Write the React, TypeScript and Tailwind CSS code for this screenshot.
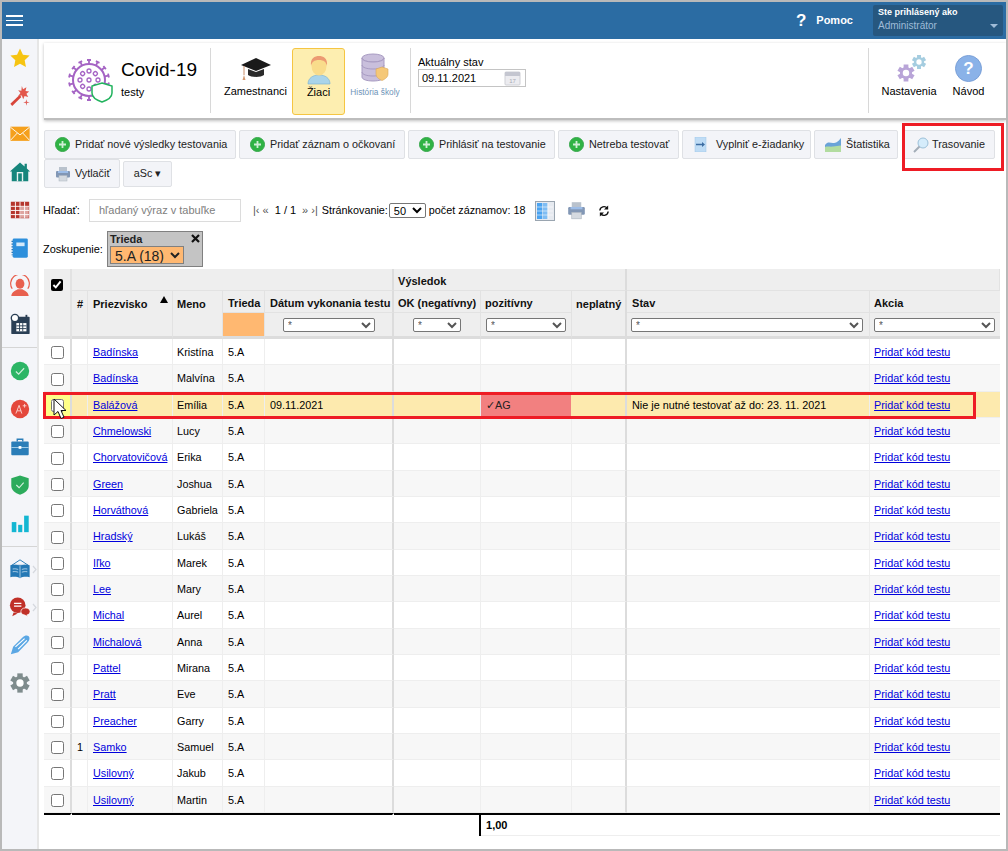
import React, { ReactNode } from 'react';

const FONT = { fontFamily: '"Liberation Sans", Arial, sans-serif' };

const students: [string, string][] = [
  ['Badínska', 'Kristína'],
  ['Badínska', 'Malvína'],
  ['Balážová', 'Emília'],
  ['Chmelowski', 'Lucy'],
  ['Chorvatovičová', 'Erika'],
  ['Green', 'Joshua'],
  ['Horváthová', 'Gabriela'],
  ['Hradský', 'Lukáš'],
  ['Iľko', 'Marek'],
  ['Lee', 'Mary'],
  ['Michal', 'Aurel'],
  ['Michalová', 'Anna'],
  ['Pattel', 'Mirana'],
  ['Pratt', 'Eve'],
  ['Preacher', 'Garry'],
  ['Samko', 'Samuel'],
  ['Usilovný', 'Jakub'],
  ['Usilovný', 'Martin'],
];

function Svg({ size = 22, children }: { size?: number; children: ReactNode }) {
  return (
    <svg width={size} height={size} viewBox="0 0 24 24" className="shrink-0">
      {children}
    </svg>
  );
}

function Gear({ x, y, r, color }: { x: number; y: number; r: number; color: string }) {
  return (
    <g>
      {[0, 60, 120].map((a) => (
        <rect
          key={a}
          x={x - r * 0.28}
          y={y - r}
          width={r * 0.56}
          height={r * 2}
          fill={color}
          transform={`rotate(${a} ${x} ${y})`}
        />
      ))}
      <circle cx={x} cy={y} r={r * 0.72} fill={color} />
      <circle cx={x} cy={y} r={r * 0.38} fill="#fff" />
    </g>
  );
}

const sideTop: ReactNode[] = [
  <Svg key="star"><path d="M12 1.500l3.200 6.900 7.300.9-5.400 5.100 1.400 7.400L12 18.200l-6.500 3.600 1.400-7.400L1.500 9.300l7.300-.9z" fill="#f6c412" /></Svg>,
  <Svg key="wand">
    <path d="M1.500 20.500l10-9.500 2 2-10 10z" fill="#d8453a" />
    <path d="M14 1l1.300 3.500 3.700-2-1 4 4 .5-3 2.500 2 3.500-4-1-1.500 3.500-1.500-4-4 .5 2.500-3.300-2.500-3 3.500.5z" fill="#e2574c" />
    <path d="M19 15.500l.7 2.800 2.800.7-2.800.7-.7 2.800-.7-2.800-2.800-.7 2.800-.7z" fill="#e0605a" />
  </Svg>,
  <Svg key="mail">
    <rect x="1.500" y="4" width="21" height="15.500" fill="#f5a01c" />
    <path d="M1.500 4.500L12 13 22.500 4.500M1.500 19L9 11M22.500 19L15 11" stroke="#fff" strokeWidth="1" fill="none" />
  </Svg>,
  <Svg key="home">
    <path d="M12 1.500l5 4.500V3h2.500v5.200L23 11.500h-2V22H3V11.500H1z" fill="#16857c" />
    <rect x="8.500" y="12" width="7" height="10" fill="#fff" opacity=".9" />
    <rect x="10" y="13.500" width="4" height="8.500" fill="#16857c" />
  </Svg>,
  <Svg key="grid">
    <rect x="2" y="3" width="20" height="18" fill="#b5352d" />
    <path d="M2 8h20M2 12.500h20M2 17h20M7 3v18M12 3v18M17 3v18" stroke="#fff" strokeWidth="1" />
    <rect x="12.500" y="8.500" width="9" height="12" fill="#fff" opacity=".55" />
  </Svg>,
  <Svg key="book">
    <rect x="4" y="1.500" width="16.500" height="21" rx="1.500" fill="#2d8fdc" />
    <rect x="8" y="6" width="9" height="4" fill="#d4e9fa" />
    <path d="M3.500 4v16" stroke="#1b6fb2" strokeWidth="1.500" strokeDasharray="1.500 1.500" />
  </Svg>,
  <Svg key="person">
    <path d="M3.500 15A10.200 10.200 0 1120.500 15" fill="none" stroke="#e8604f" strokeWidth="1.300" />
    <ellipse cx="12" cy="9.500" rx="4.800" ry="5.500" fill="#e8604f" />
    <path d="M2.500 23c.5-5 5-6 7-7.500h5c2 1.500 6.500 2.500 7 7.500z" fill="#e8604f" />
  </Svg>,
  <Svg key="calendar">
    <rect x="2.500" y="4" width="20" height="19" rx="1" fill="#2a3f55" />
    <rect x="8" y="11" width="11" height="9" fill="#fff" />
    <path d="M11.500 11v9M15 11v9M8 14h11M8 17h11" stroke="#2a3f55" strokeWidth="1" />
    <circle cx="6.500" cy="5.500" r="4" fill="#fff" stroke="#2a3f55" strokeWidth="1.500" />
    <rect x="18" y="2" width="2" height="4" fill="#2a3f55" />
  </Svg>,
];

const sideMid: ReactNode[] = [
  <Svg key="check">
    <circle cx="12" cy="12" r="10" fill="#2cb565" />
    <path d="M7.500 12.500l3 3 6-6.500" stroke="#cdeedb" strokeWidth="1.300" fill="none" />
  </Svg>,
  <Svg key="grade">
    <circle cx="12" cy="12" r="10" fill="#e4483c" />
    <path d="M7.500 17l3.500-9 3 9M8.800 14h4.500M15 8.500h4M17 6.500v4" stroke="#fbd4d0" strokeWidth="1" fill="none" />
  </Svg>,
  <Svg key="case">
    <rect x="2.500" y="6" width="19" height="15" rx="1" fill="#2a7db8" />
    <path d="M9 6V3.500h6V6" stroke="#2a7db8" strokeWidth="1.500" fill="none" />
    <rect x="2.500" y="12" width="19" height="1" fill="#a8d2ec" />
    <rect x="10.500" y="11" width="3" height="3" fill="#fff" />
  </Svg>,
  <Svg key="shield">
    <path d="M12 1.500l9.500 3v8c0 5-4 8.500-9.500 10-5.500-1.500-9.500-5-9.500-10v-8z" fill="#2cab5c" />
    <path d="M8 12l3 3 5-5.500" stroke="#d6f1e0" strokeWidth="1.200" fill="none" />
  </Svg>,
  <Svg key="chart">
    <rect x="3" y="11" width="5" height="11" fill="#13b6d2" />
    <rect x="10" y="14" width="4.500" height="8" fill="#13b6d2" />
    <rect x="16.500" y="4" width="5" height="18" fill="#13b6d2" />
  </Svg>,
];

const sideBottom: { icon: ReactNode; more?: boolean }[] = [
  {
    more: true,
    icon: (
      <Svg key="open">
        <path d="M12 2L3 8h18z" fill="none" stroke="#2478b5" strokeWidth="1" />
        <path d="M1.500 8c4-1 8-.5 10.500 1 2.500-1.500 6.500-2 10.500-1v13c-4-1-8-.5-10.500 1-2.500-1.500-6.500-2-10.500-1z" fill="#2478b5" />
        <path d="M12 9v13M4 12c2.500-.5 4.500 0 6 .5M4 15c2.500-.5 4.500 0 6 .5M14 12.500c1.500-.5 3.500-1 6-.5M14 15.500c1.500-.5 3.500-1 6-.5" stroke="#d4e8f5" strokeWidth=".8" fill="none" />
      </Svg>
    ),
  },
  {
    more: true,
    icon: (
      <Svg key="chat">
        <circle cx="9.500" cy="10" r="8.500" fill="#c03028" />
        <path d="M5 18l-1.500 4 6-3z" fill="#c03028" />
        <path d="M5.500 8h8M5.500 11h8" stroke="#fff" strokeWidth="1.200" />
        <path d="M13 17c0-2.500 2-4 5-4s5 1.500 5 4-2 3.500-3.500 3.700L22 23l-5-2.300c-2.500-.2-4-1.500-4-3.700z" fill="#c03028" stroke="#fff" strokeWidth=".8" />
      </Svg>
    ),
  },
  {
    icon: (
      <Svg key="pen">
        <path d="M2 22l2.500-8L15 3.500c2-2 5-2.500 6.500-1s1 4.500-1 6.500L10 20z" fill="#5ba7e4" />
        <path d="M7 14L17 5M10 16.500L19.500 7" stroke="#fff" strokeWidth="1.300" />
      </Svg>
    ),
  },
  {
    icon: (
      <Svg key="gear">
        <Gear x={12} y={12} r={10.500} color="#7f8c8d" />
      </Svg>
    ),
  },
];

function PlusIcon() {
  return (
    <span className="w-[15px] h-[15px] shrink-0 rounded-full bg-[#2fb344] flex items-center justify-center border border-[#37a84c]">
      <svg width="9" height="9" viewBox="0 0 9 9">
        <path d="M4.500 1v7M1 4.500h7" stroke="#cfeed5" strokeWidth="1.800" />
      </svg>
    </span>
  );
}

function PrinterIcon({ size = 16 }: { size?: number }) {
  return (
    <svg width={size} height={size} viewBox="0 0 16 16" className="shrink-0">
      <rect x="4" y="1" width="8" height="5" fill="#b9c2cd" />
      <rect x="1" y="5" width="14" height="6.500" rx="1" fill="#8297b5" />
      <rect x="3" y="5" width="10" height="2" fill="#9dbde8" />
      <rect x="4" y="9.500" width="8" height="5.500" fill="#d5dae0" stroke="#a9b2bd" strokeWidth=".5" />
    </svg>
  );
}

function Btn({ icon, label, className }: { icon: ReactNode; label: string; className: string }) {
  return (
    <button className={`flex items-center gap-[5px] pl-[10px] h-[29px] bg-[#f3f4f8] border border-[#dfe1e5] rounded-[2px] text-[10.800px] text-[#222] whitespace-nowrap ${className}`}>
      {icon}
      <span>{label}</span>
    </button>
  );
}

function CardIcon({ icon, label, className = '' }: { icon: ReactNode; label: string; className?: string }) {
  return (
    <div className={`flex flex-col items-center h-[67px] pt-[5px] ${className}`}>
      <div className="h-[31px] flex items-center justify-center">{icon}</div>
      <div className="mt-px text-[11px] leading-[13px] text-black whitespace-nowrap">{label}</div>
    </div>
  );
}

function CovidLogo() {
  const spikes = Array.from({ length: 14 }, (_, i) => (i * 360) / 14);
  const ring = Array.from({ length: 8 }, (_, i) => (i * 360) / 8);
  return (
    <svg width="46" height="44" viewBox="0 0 46 44">
      <circle cx="21" cy="21" r="16" fill="none" stroke="#a564c4" strokeWidth="2" />
      {spikes.map((a) => (
        <g key={a} transform={`rotate(${a} 21 21)`}>
          <path d="M21 5V1M19 1h4" stroke="#a564c4" strokeWidth="1.800" fill="none" />
        </g>
      ))}
      <circle cx="21" cy="21" r="2" fill="none" stroke="#a564c4" strokeWidth="1.300" />
      {ring.map((a) => (
        <g key={a} transform={`rotate(${a} 21 21)`}>
          <circle cx="21" cy="12" r="2" fill="none" stroke="#a564c4" strokeWidth="1.300" />
        </g>
      ))}
      <path d="M34 24l10 3v7c0 4-4 7-10 9-6-2-10-5-10-9v-7z" fill="#fff" stroke="#22b35e" strokeWidth="1.500" />
    </svg>
  );
}

function FilterSel({ className }: { className: string }) {
  return (
    <select className={`h-[14px] bg-white border border-[#767676] rounded-[2px] text-[10px] font-normal text-[#555] leading-none ${className}`}>
      <option>*</option>
    </select>
  );
}

const th = 'bg-[#eeeeee] border-r border-b border-[#e2e2e2] text-left font-bold text-[11px] text-[#111] px-[5px] align-middle whitespace-nowrap overflow-hidden';

export default function App() {
  return (
    <div style={FONT} className="w-[1008px] h-[851px] bg-white border-t-2 border-l-2 border-r-2 border-b-2 border-[#b9b9b9] flex flex-col overflow-hidden relative">
      {/* top bar */}
      <header className="h-[37px] shrink-0 bg-[#2b6ca3] flex items-center">
        <div className="ml-[4px] w-[17px] flex flex-col gap-[3px]">
          <span className="h-[1.500px] bg-white" />
          <span className="h-[1.500px] bg-white" />
          <span className="h-[1.500px] bg-white" />
        </div>
        <span className="ml-auto text-[17px] font-bold text-white">?</span>
        <span className="ml-[10px] text-[11px] font-bold text-white">Pomoc</span>
        <div className="ml-[20px] mr-[3px] w-[130px] h-[31px] bg-[#26577f] rounded-[2px] px-[5px] pt-px relative">
          <div className="text-[9px] font-bold text-white leading-[13px]">Ste prihlásený ako</div>
          <div className="text-[10px] text-[#9fbcd8] leading-[14px]">Administrátor</div>
          <span className="absolute right-[5px] top-[19px] w-0 h-0 border-x-[4px] border-x-transparent border-t-[4px] border-t-[#9fbcd8]" />
        </div>
      </header>

      <div className="flex flex-1 min-h-0">
        {/* sidebar */}
        <aside className="w-[37px] shrink-0 bg-[#f4f5f9] border-r-2 border-[#e6e6e6] flex flex-col">
          {sideTop.map((ic, i) => (
            <div key={i} className="h-[38px] flex items-center justify-center">{ic}</div>
          ))}
          <div className="h-px bg-[#d5d5d5] mt-[4px] mb-[4px]" />
          {sideMid.map((ic, i) => (
            <div key={i} className="h-[38px] flex items-center justify-center">{ic}</div>
          ))}
          <div className="h-px bg-[#d5d5d5] mt-[4px] mb-[3px]" />
          {sideBottom.map((item, i) => (
            <div key={i} className="h-[38px] flex items-center justify-center relative">
              {item.icon}
              {item.more && (
                <svg width="5" height="9" viewBox="0 0 5 9" className="absolute right-0 top-[15px]">
                  <path d="M1 1l3 3.500L1 8" stroke="#d5d8de" strokeWidth="1.200" fill="none" />
                </svg>
              )}
            </div>
          ))}
        </aside>

        <main className="flex-1 min-w-0">
          {/* header card */}
          <div className="ml-[5px] mt-[4px] h-[77px] bg-white border-b-2 border-[#bdbdbd] shadow-[0_1px_3px_rgba(0,0,0,0.25)] flex items-stretch py-[5px]">
            <div className="w-[167px] shrink-0 border-r border-[#d8d8d8] flex items-center pl-[24px] gap-[7px]">
              <CovidLogo />
              <div className="-mt-[2px]">
                <div className="text-[19px] leading-[24px] text-black">Covid-19</div>
                <div className="text-[11px] leading-[20px] text-black">testy</div>
              </div>
            </div>
            <CardIcon
              className="ml-[13px] w-[63px]"
              label="Zamestnanci"
              icon={
                <svg width="32" height="26" viewBox="0 0 32 26">
                  <path d="M16 2L31 9l-15 6L1 9z" fill="#1a1a1a" />
                  <path d="M8 13v6c3 2.500 13 2.500 16 0v-6l-8 3z" fill="#2b2b2b" />
                  <path d="M4 10v9" stroke="#c98e6a" strokeWidth="1" />
                  <path d="M4 19l-1.500 5h3z" fill="#d49a72" />
                </svg>
              }
            />
            <CardIcon
              className="ml-[5px] w-[53px] bg-[#fdeeb0] border border-[#f5c542] rounded-[3px]"
              label="Žiaci"
              icon={
                <svg width="26" height="30" viewBox="0 0 26 30">
                  <path d="M2 29c0-6 5-9 11-9s11 3 11 9z" fill="#a9d4ea" stroke="#7fb4d3" strokeWidth=".7" />
                  <ellipse cx="13" cy="11" rx="7.500" ry="9.500" fill="#f9dc8b" />
                  <path d="M5 11C4 3 9 1 13 1s9 2 8 10c-1-4-3-6-8-6s-7 2-8 6z" fill="#ec9a72" />
                </svg>
              }
            />
            <div className="ml-[5px] w-[50px] flex flex-col items-center pt-[5px]">
              <svg width="30" height="31" viewBox="0 0 30 31">
                <ellipse cx="13" cy="5" rx="11" ry="4" fill="#c9bfdc" stroke="#a89bc2" />
                <path d="M2 5v19c0 2.500 5 4 11 4s11-1.500 11-4V5c0 2.500-5 4-11 4S2 7.500 2 5z" fill="#c9bfdc" stroke="#a89bc2" />
                <path d="M2 12c0 2.500 5 4 11 4s11-1.500 11-4M2 19c0 2.500 5 4 11 4s11-1.500 11-4" fill="none" stroke="#a89bc2" />
                <path d="M22 14l6 2v5c0 3-2.500 5-6 6.500-3.500-1.500-6-3.500-6-6.500v-5z" fill="#f5c878" stroke="#d9a85a" strokeWidth=".6" />
              </svg>
              <div className="mt-[3px] text-[8.300px] leading-[10px] text-[#6e93b8] whitespace-nowrap">História školy</div>
            </div>
            <div className="ml-[10px] w-px bg-[#d8d8d8] shrink-0" />
            <div className="ml-[7px] pt-[8px]">
              <div className="text-[11px] leading-[13px] text-black">Aktuálny stav</div>
              <div className="w-[108px] h-[18px] border border-[#c4c4c4] flex items-center justify-between pl-[3px] pr-[4px] text-[11px] text-black">
                <span>09.11.2021</span>
                <svg width="17" height="16" viewBox="0 0 17 16">
                  <rect x="1" y="2" width="15" height="13" rx="1" fill="#ececf0" stroke="#cfd0d6" />
                  <rect x="1" y="2" width="15" height="4" fill="#c4c6d0" />
                  <text x="8.500" y="13" fontSize="6" textAnchor="middle" fill="#a9abb4">17</text>
                </svg>
              </div>
            </div>
            <div className="ml-auto w-px bg-[#d8d8d8] shrink-0" />
            <CardIcon
              className="ml-[13px] w-[54px]"
              label="Nastavenia"
              icon={
                <svg width="30" height="30" viewBox="0 0 30 30" className="translate-x-[2px]">
                  <Gear x={10} y={19} r={8.500} color="#b9a5d8" />
                  <Gear x={23} y={8} r={7} color="#a5cde0" />
                </svg>
              }
            />
            <CardIcon
              className="ml-[17px] mr-[22px] w-[31px]"
              label="Návod"
              icon={
                <span className="w-[27px] h-[27px] rounded-full bg-[#8ab2e8] border border-[#7aa0d8] text-white text-[17px] font-bold flex items-center justify-center">?</span>
              }
            />
          </div>

          {/* action buttons */}
          <div className="ml-[5px] mt-[10px] flex gap-[3px]">
            <Btn className="w-[192px]" icon={<PlusIcon />} label="Pridať nové výsledky testovania" />
            <Btn className="w-[166px]" icon={<PlusIcon />} label="Pridať záznam o očkovaní" />
            <Btn className="w-[147px]" icon={<PlusIcon />} label="Prihlásiť na testovanie" />
            <Btn className="w-[121px]" icon={<PlusIcon />} label="Netreba testovať" />
            <Btn
              className="w-[129px]"
              label="Vyplniť e-žiadanky"
              icon={
                <svg width="16" height="15" viewBox="0 0 16 15" className="mr-[2px]">
                  <rect x="2" y="0" width="11" height="15" fill="#bfdcf5" stroke="#9cc4e6" strokeWidth=".5" />
                  <path d="M3 7.500h7" stroke="#3d6da3" strokeWidth="1.500" />
                  <path d="M9 5l3 2.500L9 10z" fill="#3d6da3" />
                </svg>
              }
            />
            <Btn
              className="w-[84px]"
              label="Štatistika"
              icon={
                <svg width="16" height="14" viewBox="0 0 16 14">
                  <path d="M0 14V7c3-4 5-2 8-2s5-1 8-5v14z" fill="#6aa3d8" />
                  <path d="M0 14V9c3-1 5 0 8-.5s5-.5 8-1V14z" fill="#b2dca0" />
                </svg>
              }
            />
            <Btn
              className="ml-px w-[93px] !gap-[3px]"
              label="Trasovanie"
              icon={
                <svg width="16" height="16" viewBox="0 0 16 16">
                  <circle cx="10" cy="6" r="5" fill="#d5ecfb" stroke="#9cc0d8" />
                  <path d="M6.500 9.500L1 15" stroke="#a3adb8" strokeWidth="2" />
                </svg>
              }
            />
          </div>
          <div className="ml-[5px] flex gap-[3px] items-center">
            <Btn className="w-[76px] !gap-[4px]" icon={<PrinterIcon />} label="Vytlačiť" />
            <button className="w-[49px] h-[26px] bg-[#f3f4f8] border border-[#dfe1e5] rounded-[2px] text-[10.800px] text-[#222]">aSc ▾</button>
          </div>

          {/* search + paging */}
          <div className="ml-[4px] mt-[11px] h-[23px] flex items-center text-[11px] text-black whitespace-nowrap">
            <span className="w-[46px]">Hľadať:</span>
            <div className="w-[152px] h-[23px] border border-[#dcdcdc] pl-[9px] flex items-center text-[#808080]">hľadaný výraz v tabuľke</div>
            <span className="ml-[12px] text-[#555]">|‹ «</span>
            <span className="ml-[6px]">1 / 1</span>
            <span className="ml-[6px] text-[#555]">» ›|</span>
            <span className="ml-[4px] text-[10.800px]">Stránkovanie:</span>
            <select className="ml-px w-[37px] h-[15px] bg-white border border-[#767676] rounded-[2px] text-[11px] leading-none">
              <option>50</option>
            </select>
            <span className="ml-[3px] text-[10.800px]">počet záznamov: 18</span>
            <svg width="20" height="20" viewBox="0 0 20 20" className="ml-[10px]">
              <rect x="0.500" y="0.500" width="19" height="19" fill="#e6eaf0" stroke="#9aa5b0" />
              <rect x="2" y="2" width="5" height="16" fill="#4aa3f0" />
              <rect x="7.500" y="2" width="5" height="16" fill="#7fbdf3" />
              <path d="M2 6h16M2 10h16M2 14h16M13 2v16" stroke="#fff" strokeWidth=".7" opacity=".8" />
            </svg>
            <span className="ml-[12px]"><PrinterIcon size={19} /></span>
            <svg width="12" height="12" viewBox="0 0 13 13" className="ml-[12px]">
              <path d="M2 6a4.500 4.500 0 018-2.500M11 7a4.500 4.500 0 01-8 2.500" stroke="#111" strokeWidth="1.500" fill="none" />
              <path d="M11 0.500V5H6.500zM2 12.500V8h4.500z" fill="#111" />
            </svg>
          </div>

          {/* grouping */}
          <div className="ml-[4px] mt-[9px] flex items-center h-[36px] text-[11px] text-black">
            <span className="w-[64px]">Zoskupenie:</span>
            <div className="w-[96px] h-[36px] bg-[#c4c4c4] border border-[#808080] pl-[2px] relative">
              <div className="text-[11px] leading-[14px] font-bold text-[#222]">Trieda</div>
              <select className="block w-[74px] h-[18px] bg-[#ffb871] border border-[#808080] text-[14px] leading-none text-[#222]">
                <option>5.A (18)</option>
              </select>
              <svg width="9" height="9" viewBox="0 0 9 9" className="absolute right-[2px] top-[2px]">
                <path d="M1 1l7 7M8 1L1 8" stroke="#111" strokeWidth="2.200" />
              </svg>
            </div>
          </div>

          {/* table */}
          <table className="ml-[5px] mt-[2px] w-[956px] table-fixed border-separate border-spacing-0 text-[10.800px]">
            <colgroup>
              <col className="w-[28px]" />
              <col className="w-[16px]" />
              <col className="w-[85px]" />
              <col className="w-[50px]" />
              <col className="w-[42px]" />
              <col className="w-[129px]" />
              <col className="w-[87px]" />
              <col className="w-[91px]" />
              <col className="w-[55px]" />
              <col className="w-[243px]" />
              <col className="w-[130px]" />
            </colgroup>
            <thead>
              <tr className="h-[22px]">
                <th rowSpan={3} className={`${th} !border-r-2 !border-b-[3px] border-[#dcdcdc] !text-center !align-top pt-[10px] !px-0`}>
                  <input type="checkbox" defaultChecked readOnly className="accent-black w-[12px] h-[12px] align-top" />
                </th>
                <th colSpan={5} className={`${th} !border-r-2 border-r-[#dcdcdc]`} />
                <th colSpan={3} className={`${th} !border-r-2 border-r-[#dcdcdc] !pl-[4px] pt-[3px]`}>Výsledok</th>
                <th colSpan={2} className={th} />
              </tr>
              <tr className="h-[22px]">
                <th rowSpan={2} className={`${th} !border-b-[3px] border-b-[#dcdcdc] !align-top pt-[5px]`}>#</th>
                <th rowSpan={2} className={`${th} !border-b-[3px] border-b-[#dcdcdc] !align-top pt-[5px] relative`}>
                  Priezvisko
                  <span className="absolute right-[4px] top-[5px] w-0 h-0 border-x-[4px] border-x-transparent border-b-[7px] border-b-black" />
                </th>
                <th rowSpan={2} className={`${th} !border-b-[3px] border-b-[#dcdcdc] !align-top pt-[5px] !pl-[4px]`}>Meno</th>
                <th className={`${th} !pr-0 pt-[3px]`}>Trieda</th>
                <th className={`${th} !border-r-2 border-r-[#dcdcdc] !pr-0 pt-[3px]`}>Dátum vykonania testu</th>
                <th className={`${th} !pl-[4px] !pr-0 pt-[3px]`}>OK (negatívny)</th>
                <th className={`${th} !pl-[4px] pt-[3px]`}>pozitívny</th>
                <th rowSpan={2} className={`${th} !border-r-2 border-r-[#dcdcdc] !border-b-[3px] border-b-[#dcdcdc] !align-top pt-[5px] !pl-[4px] !pr-0`}>neplatný</th>
                <th className={`${th} pt-[3px]`}>Stav</th>
                <th className={`${th} !border-r-0 !pl-[4px] pt-[3px]`}>Akcia</th>
              </tr>
              <tr className="h-[26px]">
                <th className="bg-[#ffb871] border-r border-[#e2e2e2] border-b-[3px] border-b-[#dcdcdc]" />
                <th className={`${th} !border-r-2 border-r-[#dcdcdc] !border-b-[3px] border-b-[#dcdcdc] !text-center !pl-px !pr-0 pt-px`}><FilterSel className="w-[92px]" /></th>
                <th className={`${th} !border-b-[3px] border-b-[#dcdcdc] !text-center !px-0 pt-px`}><FilterSel className="w-[48px]" /></th>
                <th className={`${th} !border-b-[3px] border-b-[#dcdcdc] !text-center !px-0 pt-px`}><FilterSel className="w-[80px]" /></th>
                <th className={`${th} !border-b-[3px] border-b-[#dcdcdc] !pl-[4px] !pr-0 pt-px`}><FilterSel className="w-[232px]" /></th>
                <th className={`${th} !border-r-0 !border-b-[3px] border-b-[#dcdcdc] !pl-[4px] !pr-0 pt-px`}><FilterSel className="w-[121px]" /></th>
              </tr>
            </thead>
            <tbody>
              {students.map(([last, first], i) => {
                const marked = i === 2;
                const bg = marked ? 'bg-[#fdeaae]' : i % 2 ? 'bg-[#f7f7f7]' : 'bg-white';
                const td = `${bg} border-r border-b border-[#eeeeee] px-[5px] pt-px text-black whitespace-nowrap overflow-hidden`;
                const thick = `${bg} border-r-2 border-r-[#dcdcdc] border-b border-b-[#eeeeee] px-[5px] pt-px text-black whitespace-nowrap`;
                return (
                  <tr key={`${last}-${first}`} className="h-[26.330px]">
                    <td className={`${marked ? 'bg-[#ffff88]' : bg} border-r-2 border-r-[#dcdcdc] border-b border-b-[#eeeeee] text-center`}>
                      <input type="checkbox" className="w-[13px] h-[13px] align-middle" />
                    </td>
                    <td className={td}>{last === 'Samko' ? '1' : ''}</td>
                    <td className={td}>
                      <a href="#" className="text-[#0000dd] underline">{last}</a>
                    </td>
                    <td className={`${td} !pl-[4px]`}>{first}</td>
                    <td className={td}>5.A</td>
                    <td className={thick}>{marked ? '09.11.2021' : ''}</td>
                    <td className={td} />
                    <td className={marked ? 'bg-[#f28080] border-r border-b border-[#fdeaae] px-[5px] pt-px text-[#222]' : td}>{marked ? '✓AG' : ''}</td>
                    <td className={thick} />
                    <td className={td}>{marked ? 'Nie je nutné testovať až do: 23. 11. 2021' : ''}</td>
                    <td className={`${td} !border-r-0 !pl-[4px]`}>
                      <a href="#" className="text-[#0000dd] underline">Pridať kód testu</a>
                    </td>
                  </tr>
                );
              })}
            </tbody>
            <tfoot>
              <tr className="h-[23px]">
                <td className="border-t-2 border-t-black border-r-2 border-r-white" />
                <td colSpan={5} className="border-t-2 border-t-black border-r-2 border-r-white" />
                <td className="border-t-2 border-t-black border-r-2 border-r-black" />
                <td colSpan={2} className="border-t-2 border-t-black border-b border-b-[#eeeeee] pl-[5px] font-bold text-[11px] text-black">1,00</td>
                <td className="border-t-2 border-t-black border-b border-b-[#eeeeee]" />
                <td className="border-t-2 border-t-black border-b border-b-[#eeeeee]" />
              </tr>
            </tfoot>
          </table>
        </main>
      </div>

      {/* red annotation boxes and the mouse pointer, drawn over the page */}
      <div className="absolute left-[900px] top-[121px] w-[102px] h-[48px] border-[3px] border-[#ee1c25] pointer-events-none" />
      <div className="absolute left-[41px] top-[390px] w-[933px] h-[27px] border-[3px] border-[#ee1c25] pointer-events-none" />
      <svg width="14" height="22" viewBox="0 0 14 22" className="absolute left-[51px] top-[396px] pointer-events-none">
        <path d="M1 1v16l4-3.500 3 7 3-1.300-3-6.700h5z" fill="#fff" stroke="#111" strokeWidth="1" />
      </svg>
    </div>
  );
}
